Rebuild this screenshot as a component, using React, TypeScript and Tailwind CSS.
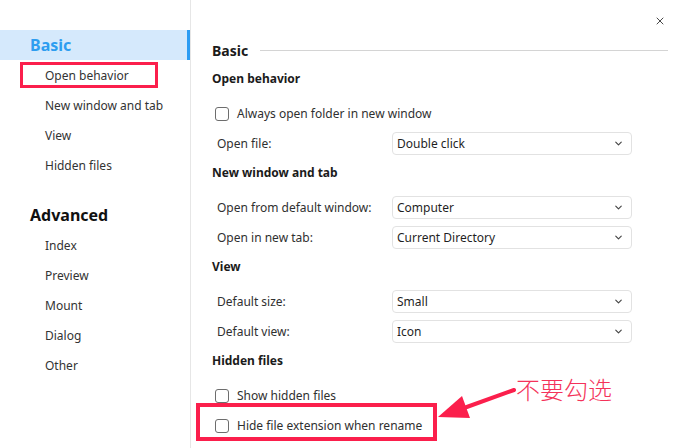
import { ChevronDown, X } from "lucide-react";

const basicNav = ["Open behavior", "New window and tab", "View", "Hidden files"];
const advancedNav = ["Index", "Preview", "Mount", "Dialog", "Other"];

function Heading({ children }: { children: React.ReactNode }) {
  return (
    <div className="h-[28px] flex items-center pt-[1px] text-[12px] font-bold text-[#1b1b1b]">
      {children}
    </div>
  );
}

function Check({ label }: { label: string }) {
  return (
    <div className="h-[30px] flex items-center pl-[3px] pt-[1px]">
      <span className="w-[14px] h-[14px] rounded-[3px] border border-[#6d6d6d] bg-white" />
      <span className="ml-[8px] text-[12px] text-[#303030]">{label}</span>
    </div>
  );
}

function SelectRow({ label, value }: { label: string; value: string }) {
  return (
    <div className="h-[30px] flex items-center pl-[5px] pt-[1px]">
      <span className="w-[175px] text-[12px] text-[#303030]">{label}</span>
      <div className="w-[240px] h-[23px] flex items-center justify-between rounded-[4px] border border-[#e2e2e2] bg-white pl-[4px] pr-[7px]">
        <span className="text-[12px] text-[#1f1f1f]">{value}</span>
        <ChevronDown size={11} strokeWidth={2.5} className="text-[#444]" />
      </div>
    </div>
  );
}

export default function App() {
  return (
    <div className="relative w-[680px] h-[448px] bg-white flex font-['Noto_Sans',sans-serif] overflow-hidden">
      {/* sidebar */}
      <div className="w-[191px] shrink-0 border-r border-[#e6e6e6] pt-[30px]">
        <div className="h-[30px] flex items-center pl-[30px] bg-[#d5e9fc] border-r-[3px] border-[#2c9cf3] text-[16px] font-bold text-[#2d9df0]">
          Basic
        </div>
        {basicNav.map((item) => (
          <div key={item} className="h-[30px] flex items-center pl-[45px] pt-[2px] text-[12px] text-[#333]">
            {item}
          </div>
        ))}
        <div className="h-[30px] mt-[20px] flex items-center pl-[30px] text-[16px] font-bold text-[#111]">
          Advanced
        </div>
        {advancedNav.map((item) => (
          <div key={item} className="h-[30px] flex items-center pl-[45px] pt-[2px] text-[12px] text-[#333]">
            {item}
          </div>
        ))}
      </div>

      {/* content */}
      <div className="flex-1 pl-[21px] pr-[12px] pt-[36px] flex flex-col">
        <div className="h-[28px] flex items-center gap-[12px]">
          <span className="text-[14px] font-bold text-[#1b1b1b]">Basic</span>
          <span className="flex-1 h-px bg-[#d4d4d4]" />
        </div>
        <Heading>Open behavior</Heading>
        <div className="mt-[6px]">
          <Check label="Always open folder in new window" />
          <SelectRow label="Open file:" value="Double click" />
        </div>
        <Heading>New window and tab</Heading>
        <div className="mt-[6px]">
          <SelectRow label="Open from default window:" value="Computer" />
          <SelectRow label="Open in new tab:" value="Current Directory" />
        </div>
        <Heading>View</Heading>
        <div className="mt-[6px]">
          <SelectRow label="Default size:" value="Small" />
          <SelectRow label="Default view:" value="Icon" />
        </div>
        <Heading>Hidden files</Heading>
        <div className="mt-[6px]">
          <Check label="Show hidden files" />
          <Check label="Hide file extension when rename" />
        </div>
      </div>

      {/* close */}
      <button className="absolute top-[14px] right-[13px] w-[14px] h-[14px] flex items-center justify-center text-[#333]">
        <X size={12} strokeWidth={1.8} />
      </button>

      {/* annotations */}
      <div className="absolute left-[20px] top-[62px] w-[138px] h-[26px] border-[3px] border-[#fb1f4c]" />
      <div className="absolute left-[196px] top-[403px] w-[241px] h-[38px] border-[4px] border-[#fb1f4c]" />
      <svg className="absolute left-0 top-0 pointer-events-none" width="680" height="448">
        <line x1="514" y1="390" x2="464" y2="408" stroke="#fb1f4c" strokeWidth="4" strokeLinecap="round" />
        <polygon points="438,417 462,396 470,418" fill="#fb1f4c" />
      </svg>
      <span className="absolute left-[516px] top-[374px] text-[24px] leading-[30px] font-light text-[#f4325a] font-['Noto_Sans_CJK_SC',sans-serif]">
        不要勾选
      </span>
    </div>
  );
}
